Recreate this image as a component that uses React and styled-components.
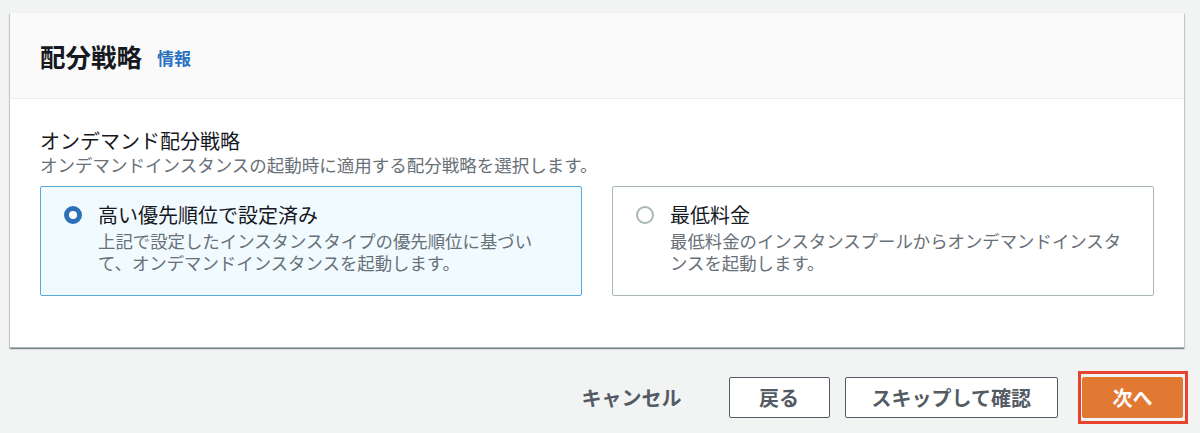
import React from "react";
import styled, { createGlobalStyle } from "styled-components";

const GlobalStyle = createGlobalStyle`
  html, body {
    margin: 0;
    padding: 0;
    background: #f2f3f3;
  }
  body {
    font-family: "Noto Sans CJK JP", "Noto Sans", sans-serif;
    color: #16191f;
  }
`;

const Page = styled.div`
  width: 1200px;
  height: 433px;
  padding-top: 13px;
  box-sizing: border-box;
  overflow: hidden;
`;

const Card = styled.section`
  margin: 0 16px 0 10px;
  background: #fff;
  box-shadow: 0 1px 1px 0 rgba(0, 28, 36, 0.3),
    1px 1px 1px 0 rgba(0, 28, 36, 0.15), -1px 1px 1px 0 rgba(0, 28, 36, 0.15);
  border-bottom: 1px solid #aab7b8;
`;

const CardHeader = styled.header`
  height: 85px;
  display: flex;
  align-items: center;
  padding: 0 30px;
  background: #fafafa;
  border-bottom: 1px solid #eaeded;
`;

const Heading = styled.h2`
  margin: 0;
  font-size: 25.5px;
  font-weight: 700;
  line-height: 36px;
  color: #16191f;
`;

const InfoLink = styled.a`
  margin-left: 15px;
  margin-top: 4px;
  font-size: 17px;
  font-weight: 700;
  line-height: 24px;
  color: #2a72c0;
  text-decoration: none;
`;

const CardBody = styled.div`
  padding: 29px 30px 51px;
`;

const FieldLabel = styled.div`
  font-size: 20px;
  line-height: 26px;
  color: #16191f;
`;

const FieldHint = styled.div`
  font-size: 17.5px;
  line-height: 22px;
  color: #687078;
  margin-bottom: 10px;
  white-space: nowrap;
`;

const TileGrid = styled.div`
  display: grid;
  grid-template-columns: 1fr 1fr;
  gap: 30px;
`;

const Tile = styled.label`
  display: flex;
  gap: 16px;
  padding: 16px 24px 20px 23px;
  min-height: 110px;
  box-sizing: border-box;
  border: 1px solid ${({ selected }) => (selected ? "#5aaad8" : "#aab7b8")};
  background: ${({ selected }) => (selected ? "#f1faff" : "#fff")};
  border-radius: 2px;
  cursor: pointer;
`;

const Radio = styled.span`
  flex: none;
  width: 18px;
  height: 18px;
  margin-top: 3px;
  border-radius: 50%;
  box-sizing: border-box;
  background: #fff;
  border: ${({ checked }) =>
    checked ? "5px solid #2f6fb7" : "2px solid #aab7b8"};
`;

const TileText = styled.div`
  display: flex;
  flex-direction: column;
`;

const TileTitle = styled.span`
  font-size: 20px;
  line-height: 24px;
  color: #16191f;
  margin-bottom: 3px;
`;

const TileDesc = styled.span`
  font-size: 17.4px;
  line-height: 22px;
  color: #687078;
`;

const Footer = styled.div`
  display: flex;
  justify-content: flex-end;
  align-items: center;
  margin-top: 23px;
  padding: 0 12px 0 10px;
`;

const CancelButton = styled.button`
  font: inherit;
  font-size: 20px;
  font-weight: 700;
  color: #545b64;
  background: none;
  border: none;
  padding: 0 20px;
  margin-right: 27px;
  height: 41px;
`;

const Button = styled.button`
  font: inherit;
  font-size: 20px;
  font-weight: 700;
  height: 41px;
  min-width: 101px;
  padding: 0 26px;
  border-radius: 2px;
  box-sizing: border-box;
  color: ${({ primary }) => (primary ? "#fff" : "#545b64")};
  background: ${({ primary }) => (primary ? "#e27932" : "#fff")};
  border: 1px solid ${({ primary }) => (primary ? "#e27932" : "#545b64")};
  & + & {
    margin-left: 15px;
  }
`;

const Highlight = styled.span`
  display: inline-flex;
  margin-left: 20px;
  padding: 3px 2px 3px 1px;
  border: 3px solid #e8432c;
`;

const options = [
  {
    title: "高い優先順位で設定済み",
    desc: [
      "上記で設定したインスタンスタイプの優先順位に基づい",
      "て、オンデマンドインスタンスを起動します。",
    ],
    checked: true,
  },
  {
    title: "最低料金",
    desc: [
      "最低料金のインスタンスプールからオンデマンドインスタ",
      "ンスを起動します。",
    ],
    checked: false,
  },
];

export default function App() {
  return (
    <>
      <GlobalStyle />
      <Page>
        <Card>
          <CardHeader>
            <Heading>配分戦略</Heading>
            <InfoLink href="#">情報</InfoLink>
          </CardHeader>
          <CardBody>
            <FieldLabel>オンデマンド配分戦略</FieldLabel>
            <FieldHint>
              オンデマンドインスタンスの起動時に適用する配分戦略を選択します。
            </FieldHint>
            <TileGrid>
              {options.map((o) => (
                <Tile key={o.title} selected={o.checked}>
                  <Radio checked={o.checked} />
                  <TileText>
                    <TileTitle>{o.title}</TileTitle>
                    <TileDesc>
                      {o.desc[0]}
                      <br />
                      {o.desc[1]}
                    </TileDesc>
                  </TileText>
                </Tile>
              ))}
            </TileGrid>
          </CardBody>
        </Card>
        <Footer>
          <CancelButton>キャンセル</CancelButton>
          <Button>戻る</Button>
          <Button>スキップして確認</Button>
          <Highlight>
            <Button primary>次へ</Button>
          </Highlight>
        </Footer>
      </Page>
    </>
  );
}
